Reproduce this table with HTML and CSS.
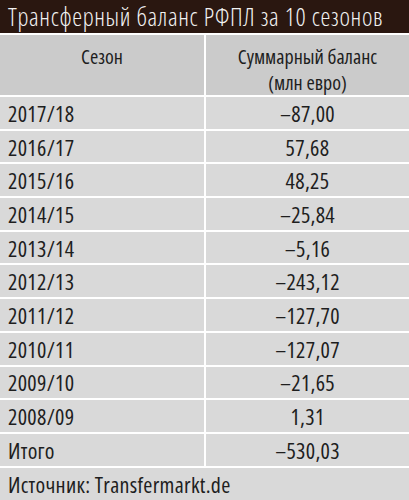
FILE: index.html
```html
<!DOCTYPE html>
<html lang="ru">
<head>
<meta charset="utf-8">
<link rel="stylesheet" href="styles.css">
</head>
<body>
<div class="card">
  <div class="title">Трансферный баланс РФПЛ за 10 сезонов</div>
  <div class="table">
    <div class="cell head">Сезон</div>
    <div class="cell head val">Суммарный баланс<br>(млн евро)</div>
    <div class="cell">2017/18</div><div class="cell val">–87,00</div>
    <div class="cell">2016/17</div><div class="cell val">57,68</div>
    <div class="cell">2015/16</div><div class="cell val">48,25</div>
    <div class="cell">2014/15</div><div class="cell val">–25,84</div>
    <div class="cell">2013/14</div><div class="cell val">–5,16</div>
    <div class="cell">2012/13</div><div class="cell val">–243,12</div>
    <div class="cell">2011/12</div><div class="cell val">–127,70</div>
    <div class="cell">2010/11</div><div class="cell val">–127,07</div>
    <div class="cell">2009/10</div><div class="cell val">–21,65</div>
    <div class="cell">2008/09</div><div class="cell val">1,31</div>
    <div class="cell">Итого</div><div class="cell val">–530,03</div>
    <div class="cell source">Источник: Transfermarkt.de</div>
  </div>
</div>
</body>
</html>
```
FILE: styles.css
```css
html, body {
  margin: 0;
  padding: 0;
  background: #ffffff;
}
.card {
  width: 409px;
  height: 500px;
  font-family: "Open Sans", "DejaVu Sans Condensed", sans-serif;
  font-stretch: 75%;
  font-weight: 300;
  color: #1e1e1e;
  overflow: hidden;
}
.title {
  height: 33px;
  background: #2a1710;
  color: #f2f2f2;
  font-size: 25px;
  letter-spacing: 0.65px;
  line-height: 33px;
  padding-left: 8px;
  margin-bottom: 2px;
  white-space: nowrap;
}
.table {
  display: grid;
  grid-template-columns: 204px 1fr;
  grid-template-rows: 60px repeat(11, 31.7px) 1fr;
  column-gap: 2px;
  row-gap: 2px;
  height: 465px;
}
.cell {
  background: #d9d9d9;
  font-size: 22px;
  font-weight: 400;
  letter-spacing: 0.3px;
  padding-left: 8px;
  display: flex;
  align-items: center;
  white-space: nowrap;
}
.cell.val {
  justify-content: center;
  padding-left: 0;
  text-align: center;
}
.cell.head {
  background: #cbcbcb;
  justify-content: center;
  padding-left: 0;
  text-align: center;
  font-size: 20px;
  letter-spacing: 0;
  line-height: 26px;
  align-items: flex-start;
  padding-top: 9px;
}
.cell.source {
  grid-column: 1 / 3;
}
```
